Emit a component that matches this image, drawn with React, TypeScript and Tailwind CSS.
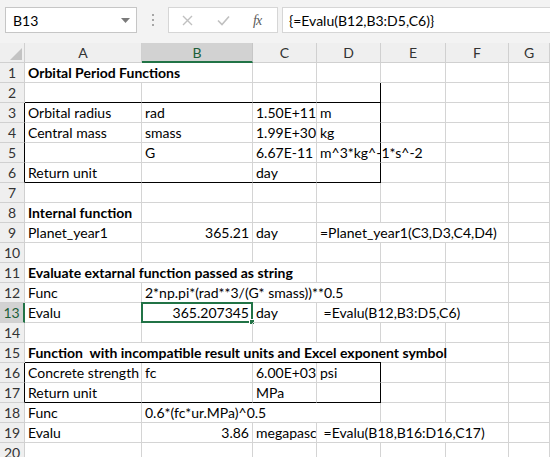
import React from "react";

type Cell = {
  t?: string;
  s?: number;
  r?: boolean;
  b?: boolean;
  bb?: boolean;
  br?: boolean;
  split?: boolean;
  clip?: boolean;
  sel?: boolean;
};

const COLS = ["A", "B", "C", "D", "E", "F", "G"];

const rows: Cell[][] = [
  [{ t: "Orbital Period Functions", b: true, s: 2 }],
  [{ bb: true }, { bb: true }, { bb: true }, { bb: true, br: true }],
  [{ t: "Orbital radius" }, { t: "rad" }, { t: "1.50E+11", r: true }, { t: "m", br: true }],
  [{ t: "Central mass" }, { t: "smass" }, { t: "1.99E+30", r: true }, { t: "kg", br: true }],
  [{}, { t: "G" }, { t: "6.67E-11", r: true }, { t: "m^3*kg^-1*s^-2", br: true }],
  [{ t: "Return unit", bb: true }, { bb: true }, { t: "day", bb: true }, { bb: true, br: true }],
  [],
  [{ t: "Internal function", b: true }],
  [{ t: "Planet_year1" }, { t: "365.21", r: true }, { t: "day" }, { t: "=Planet_year1(C3,D3,C4,D4)", s: 3 }],
  [],
  [{ t: "Evaluate extarnal function passed as string", b: true, s: 3 }],
  [{ t: "Func" }, { t: "2*np.pi*(rad**3/(G* smass))**0.5", s: 3 }],
  [{ t: "Evalu" }, { t: "365.207345", r: true, sel: true }, { t: "day" }, { t: " =Evalu(B12,B3:D5,C6)", s: 3 }],
  [],
  [{ t: "Function  with incompatible result units and Excel exponent symbol", b: true, s: 5, split: true }],
  [{ t: "Concrete strength" }, { t: "fc" }, { t: "6.00E+03", r: true }, { t: "psi", br: true }],
  [{ t: "Return unit", bb: true }, { bb: true }, { t: "MPa", bb: true }, { bb: true, br: true }],
  [{ t: "Func" }, { t: "0.6*(fc*ur.MPa)^0.5", s: 3 }],
  [{ t: "Evalu" }, { t: "3.86", r: true }, { t: "megapasc", clip: true }, { t: " =Evalu(B18,B16:D16,C17)", s: 3 }],
  [],
];

const boxRows = [3, 4, 5, 6, 16, 17];

function GridCell({ c }: { c: Cell }) {
  const span =
    c.s === 5
      ? "col-span-5"
      : c.s === 4
      ? "col-span-4"
      : c.s === 3
      ? "col-span-3"
      : c.s === 2
      ? "col-span-2"
      : "";
  const bottom = c.split
    ? "bg-[linear-gradient(to_right,#000_356px,#d4d4d4_356px)] bg-no-repeat bg-bottom bg-[length:100%_1px]"
    : c.bb
    ? "border-b border-b-black"
    : "border-b border-b-[#d4d4d4]";
  return (
    <div
      className={`relative h-5 px-[3px] whitespace-pre leading-[19px] text-black border-r ${span} ${
        c.br ? "border-r-black" : "border-r-[#d4d4d4]"
      } ${bottom} ${c.r ? "text-right" : ""} ${c.b ? "font-bold" : ""} ${
        c.clip ? "overflow-hidden" : "overflow-visible"
      }`}
    >
      {c.t}
      {c.sel && (
        <div className="absolute -left-px -top-px -right-px -bottom-px border-2 border-[#217346]">
          <div className="absolute -right-[4px] -bottom-[4px] w-[6px] h-[6px] bg-[#217346] border border-white" />
        </div>
      )}
    </div>
  );
}

function TopBar() {
  return (
    <div className="h-[43px] bg-[#f3f3f3] flex items-start pt-[7px] pl-[5px]">
      <div className="w-[132px] h-[26px] bg-white border border-[#c6c6c6] flex items-center justify-between pl-[7px] pr-[6px]">
        <span className="text-[14px] text-black">B13</span>
        <svg width="9" height="5" viewBox="0 0 9 5">
          <path d="M0 0h9L4.5 5z" fill="#7a7a7a" />
        </svg>
      </div>
      <div className="w-[31px] h-[26px] flex flex-col items-center justify-center gap-[3px]">
        <div className="w-[2px] h-[2px] bg-[#a6a6a6]" />
        <div className="w-[2px] h-[2px] bg-[#a6a6a6]" />
        <div className="w-[2px] h-[2px] bg-[#a6a6a6]" />
      </div>
      <div className="w-[110px] h-[26px] bg-white border border-[#d6d6d6] flex items-center">
        <svg className="ml-[13px]" width="11" height="11" viewBox="0 0 11 11">
          <path d="M1 1l9 9M10 1l-9 9" stroke="#c0c0c0" strokeWidth="1.4" />
        </svg>
        <svg className="ml-[24px]" width="13" height="11" viewBox="0 0 13 11">
          <path d="M1 5.5l4 4L12 1.5" stroke="#c0c0c0" strokeWidth="1.6" fill="none" />
        </svg>
        <span className="ml-[23px] text-[14px] italic text-[#5a5a5a] font-['Liberation_Serif',serif] tracking-[-1px]">
          fx
        </span>
      </div>
      <div className="ml-[4px] flex-1 h-[26px] bg-white border border-[#d6d6d6] border-r-0 flex items-center pl-[6px]">
        <span className="text-[14px] text-black">{"{=Evalu(B12,B3:D5,C6)}"}</span>
      </div>
    </div>
  );
}

export default function App() {
  return (
    <div className="w-[550px] h-[457px] overflow-hidden bg-white font-['Lato',sans-serif] text-[14px]">
      <TopBar />
      <div className="grid grid-cols-[25px_117px_111px_64px_64px_65px_63px_1fr]">
        <div className="h-5 bg-[#efefef] border-r border-b border-[#d0d0d0] flex items-end justify-end p-[2px]">
          <svg width="12" height="12" viewBox="0 0 12 12">
            <path d="M12 0v12H0z" fill="#c3c3c3" />
          </svg>
        </div>
        {COLS.map((l) =>
          l === "B" ? (
            <div
              key={l}
              className="h-5 bg-[#d2d2d2] border-r border-[#c6c6c6] border-b-2 border-b-[#217346] text-center leading-[19px] text-[#1c5e39]"
            >
              {l}
            </div>
          ) : (
            <div
              key={l}
              className="h-5 bg-[#efefef] border-r border-b border-[#d0d0d0] text-center leading-[19px] text-[#333]"
            >
              {l}
            </div>
          )
        )}
        {rows.map((row, i) => {
          const n = i + 1;
          const used = row.reduce((a, c) => a + (c.s || 1), 0);
          const cells = [...row];
          for (let k = used; k < 7; k++) cells.push({});
          const hdr =
            n === 13
              ? "bg-[#d2d2d2] border-r-2 border-r-[#217346] text-[#1c5e39]"
              : boxRows.includes(n)
              ? "bg-[#efefef] border-r border-r-black text-[#333]"
              : "bg-[#efefef] border-r border-r-[#d0d0d0] text-[#333]";
          return (
            <React.Fragment key={n}>
              <div className={`h-5 border-b border-b-[#d0d0d0] text-center leading-[19px] ${hdr}`}>{n}</div>
              {cells.map((c, j) => (
                <GridCell key={j} c={c} />
              ))}
            </React.Fragment>
          );
        })}
      </div>
    </div>
  );
}
